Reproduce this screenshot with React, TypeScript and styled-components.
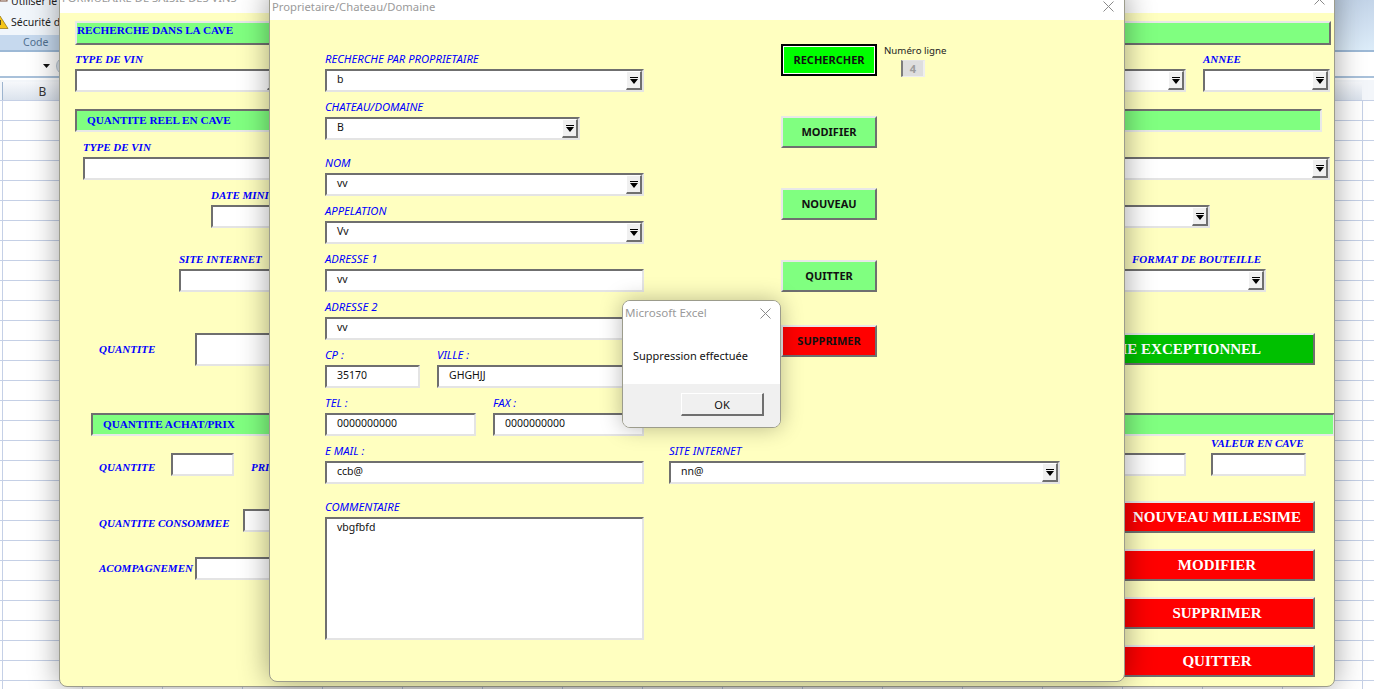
import React from 'react';

import styled, { createGlobalStyle } from 'styled-components';

const GlobalStyle = createGlobalStyle`
  html, body {
    margin: 0;
    height: 100%;
    overflow: hidden;
    background: #fff;
  }
`;

const COLUMNS = 'BCDEFGHIJKLMNOPQR'.split('');

const Desktop = styled.div`
  position: relative;
  width: 1374px;
  height: 689px;
  overflow: hidden;
  display: flex;
  flex-direction: column;
  font-family: 'Noto Sans', sans-serif;
`;

/* Excel behind the forms */

const Ribbon = styled.div`
  height: 52px;
  flex: none;
  overflow: hidden;
  box-sizing: border-box;
  border-bottom: 2px solid #9db9d6;
  background: linear-gradient(#c3d4e8, #dcecf9);
  position: relative;
`;

const RibbonPanel = styled.div`
  width: 59px;
  height: 35px;
  background: #f1f6fb;
  font-size: 10.5px;
  color: #222;
  white-space: nowrap;
  overflow: hidden;
`;

const RibbonLine = styled.div<{ $top: number }>`
  display: flex;
  align-items: center;
  gap: 2px;
  height: 16px;
  margin-top: ${({ $top }) => $top}px;
`;

const GroupName = styled.div`
  width: 59px;
  height: 15px;
  line-height: 15px;
  padding-left: 23px;
  box-sizing: border-box;
  font-size: 10.5px;
  color: #4f6f8f;
  background: #c6d9ee;
`;

const FormulaBar = styled.div`
  height: 24px;
  flex: none;
  box-sizing: content-box;
  background: #fff;
  border-bottom: 2px solid #a9c1da;
  display: flex;
  align-items: center;
  padding-left: 43px;
  gap: 6px;
`;

const FormulaRound = styled.div`
  width: 16px;
  height: 16px;
  flex: none;
  margin-top: 4px;
  border-radius: 50%;
  background: #dfe6ee;
  border: 1px solid #b9c6d4;
`;

const FormulaArrow = styled.svg`
  flex: none;
  margin-top: 4px;
`;

const HeaderRow = styled.div`
  height: 22px;
  flex: none;
  display: flex;
  padding: 2px 0 0 2px;
  box-sizing: border-box;
  background: #f3f6fa;
  border-top: 2px solid #fff;
`;

const ColumnHead = styled.div`
  width: 80px;
  flex: none;
  box-sizing: border-box;
  border-left: 1px solid #9db4cf;
  text-align: center;
  font-size: 12px;
  line-height: 20px;
  color: #333;
  background: linear-gradient(#f6f8fb, #dbe3ed);
`;

const Sheet = styled.div`
  flex: 1;
  background-color: #fff;
  background-image:
    linear-gradient(#c5d0e6 1px, transparent 1px),
    linear-gradient(90deg, #c5d0e6 1px, transparent 1px);
  background-size: 80px 20px;
  background-position: 2px 0;
`;

/* Windows */

const Window = styled.div`
  position: absolute;
  box-sizing: border-box;
  display: flex;
  flex-direction: column;
  background: #ffffc0;
  border: 1px solid #9c9c8c;
  border-radius: 8px;
  overflow: hidden;
`;

const MainWindow = styled(Window)`
  left: 59px;
  top: -20px;
  width: 1276px;
  height: 707px;
  box-shadow: 0 0 30px rgba(0, 0, 0, 0.38);
`;

const OwnerWindow = styled(Window)`
  left: 269px;
  top: -10px;
  width: 856px;
  height: 692px;
  box-shadow: 0 0 30px rgba(0, 0, 0, 0.38);
`;

const MessageWindow = styled(Window)`
  left: 622px;
  top: 300px;
  width: 159px;
  height: 128px;
  background: #fff;
  box-shadow: 0 0 22px rgba(0, 0, 0, 0.28);
`;

const TitleBar = styled.div<{ $height: number; $size: number }>`
  flex: none;
  height: ${({ $height }) => $height}px;
  display: flex;
  align-items: flex-end;
  justify-content: space-between;
  background: #fff;
  color: #9a9a9a;
  font-size: ${({ $size }) => $size}px;
`;

const TitleText = styled.span<{ $left: number; $bottom: number }>`
  margin-left: ${({ $left }) => $left}px;
  margin-bottom: ${({ $bottom }) => $bottom}px;
  line-height: 16px;
  white-space: nowrap;
`;

const CloseMark = styled.svg<{ $right: number; $bottom: number }>`
  width: 11px;
  height: 11px;
  flex: none;
  margin-right: ${({ $right }) => $right}px;
  margin-bottom: ${({ $bottom }) => $bottom}px;
`;

const Close = ({ right, bottom }: { right: number; bottom: number }) => (
  <CloseMark viewBox="0 0 11 11" $right={right} $bottom={bottom}>
    <path d="M0.5 0.5 10.5 10.5M10.5 0.5 0.5 10.5" stroke="#8a8a8a" strokeWidth="1" fill="none" />
  </CloseMark>
);

/* Controls */

const Sunken = styled.div<{ $width?: number; $height?: number }>`
  box-sizing: border-box;
  flex: none;
  position: relative;
  width: ${({ $width }) => ($width ? `${$width}px` : '100%')};
  height: ${({ $height }) => $height ?? 23}px;
  padding: 1px 0 0 10px;
  border-style: solid;
  border-width: 2px;
  border-color: #6f6f6f #e4e4e4 #e4e4e4 #6f6f6f;
  background: #fff;
  font-size: 10.5px;
  line-height: 15px;
  color: #111;
  white-space: nowrap;
  overflow: hidden;
`;

const DropButton = styled.div`
  position: absolute;
  top: 0;
  right: 0;
  bottom: 0;
  width: 16px;
  box-sizing: border-box;
  display: flex;
  align-items: center;
  justify-content: center;
  background: #f0f0f0;
  border-style: solid;
  border-width: 1px 2px 2px 1px;
  border-color: #fff #6f6f6f #6f6f6f #fff;
`;

const Combo = ({ width, value }: { width?: number; value?: string }) => (
  <Sunken $width={width}>
    {value}
    <DropButton>
      <svg width="8" height="7" viewBox="0 0 8 7">
        <path d="M0 0H8V1H0ZM0 2H8L4 7Z" fill="#000" />
      </svg>
    </DropButton>
  </Sunken>
);

const Field = styled.div<{ $width?: number; $end?: boolean; $top?: number }>`
  display: flex;
  flex-direction: column;
  flex: none;
  gap: 3px;
  width: ${({ $width }) => ($width ? `${$width}px` : 'auto')};
  align-items: ${({ $end }) => ($end ? 'flex-end' : 'flex-start')};
  margin-top: ${({ $top }) => $top ?? 0}px;
`;

const SerifLabel = styled.div<{ $end?: number }>`
  height: 13px;
  line-height: 13px;
  font-family: 'Liberation Serif', serif;
  font-weight: bold;
  font-style: italic;
  font-size: 11px;
  color: #00f;
  white-space: nowrap;
  margin-right: ${({ $end }) => $end ?? 0}px;
`;

const SansLabel = styled.div`
  height: 14px;
  line-height: 14px;
  font-style: italic;
  font-size: 11.25px;
  color: #00f;
  white-space: nowrap;
`;

/* Main form, behind */

const MainBody = styled.div`
  flex: 1;
  display: flex;
  flex-direction: column;
`;

const SectionBar = styled.div<{ $left: number; $right: number; $top: number; $raised?: boolean; $indent: number }>`
  box-sizing: border-box;
  flex: none;
  height: ${({ $raised }) => ($raised ? 24 : 23)}px;
  margin: ${({ $top }) => $top}px ${({ $right }) => $right}px 0 ${({ $left }) => $left}px;
  padding: ${({ $raised }) => ($raised ? 0 : 2)}px 0 0 ${({ $indent }) => $indent}px;
  background: #80ff80;
  border-style: solid;
  border-width: 2px;
  border-color: ${({ $raised }) =>
    $raised ? '#e8e8e8 #6f6f6f #6f6f6f #e8e8e8' : '#6f6f6f #e8e8e8 #e8e8e8 #6f6f6f'};
  font-family: 'Liberation Serif', serif;
  font-weight: bold;
  font-size: 11.2px;
  line-height: 14px;
  color: #00f;
  white-space: nowrap;
`;

const SpreadRow = styled.div<{ $left: number; $right: number; $top: number; $end?: boolean }>`
  display: flex;
  flex: none;
  justify-content: space-between;
  align-items: ${({ $end }) => ($end ? 'flex-end' : 'flex-start')};
  margin: ${({ $top }) => $top}px ${({ $right }) => $right}px 0 ${({ $left }) => $left}px;
`;

const Group = styled.div<{ $gap: number; $center?: boolean }>`
  display: flex;
  align-items: ${({ $center }) => ($center ? 'center' : 'flex-end')};
  gap: ${({ $gap }) => $gap}px;
`;

const InlineLabel = styled(SerifLabel)<{ $width?: number; $drop?: number }>`
  width: ${({ $width }) => ($width ? `${$width}px` : 'auto')};
  flex: none;
  margin-top: ${({ $drop }) => $drop ?? 0}px;
`;

const BigButton = styled.div<{ $width: number; $tone: string }>`
  box-sizing: border-box;
  flex: none;
  width: ${({ $width }) => $width}px;
  height: 32px;
  display: flex;
  align-items: center;
  justify-content: center;
  background: ${({ $tone }) => $tone};
  border-style: solid;
  border-width: 2px;
  border-color: #e8e8e8 #6f6f6f #6f6f6f #e8e8e8;
  font-family: 'Liberation Serif', serif;
  font-weight: bold;
  font-size: 15px;
  color: #fff;
  white-space: nowrap;
`;

const ButtonStack = styled.div`
  display: flex;
  flex-direction: column;
  gap: 16px;
`;

const LeftStack = styled.div`
  display: flex;
  flex-direction: column;
  gap: 25px;
  padding-top: 8px;
`;

/* Owner form, in front */

const OwnerBody = styled.div`
  flex: 1;
  padding: 24px 0 0 55px;
  display: flex;
  flex-direction: column;
`;

const OwnerTop = styled.div`
  display: flex;
  align-items: flex-start;
`;

const FieldStack = styled.div`
  width: 319px;
  flex: none;
  display: flex;
  flex-direction: column;
  gap: 8px;
  padding-top: 8px;
`;

const FieldPair = styled.div`
  display: flex;
  gap: 17px;
`;

const ActionColumn = styled.div`
  margin-left: 137px;
  display: flex;
  flex-direction: column;
`;

const ActionButton = styled.div<{ $tone: string; $top?: number; $focused?: boolean }>`
  box-sizing: border-box;
  width: 96px;
  height: 32px;
  margin-top: ${({ $top }) => $top ?? 0}px;
  padding-bottom: 2px;
  display: flex;
  align-items: center;
  justify-content: center;
  background: ${({ $tone }) => $tone};
  border-style: solid;
  border-width: 2px;
  border-color: ${({ $focused }) =>
    $focused ? '#000' : '#e8e8e8 #6f6f6f #6f6f6f #e8e8e8'};
  outline: ${({ $focused }) => ($focused ? '1px solid #fff' : 'none')};
  outline-offset: -3px;
  font-size: 11px;
  font-weight: bold;
  color: #111;
`;

const LineInfo = styled.div`
  display: flex;
  gap: 7px;
  height: 32px;
`;

const LineNumber = styled.div`
  display: flex;
  flex-direction: column;
  font-size: 9.7px;
  line-height: 14px;
  color: #222;
  gap: 2px;
  white-space: nowrap;
`;

const LineValue = styled.div`
  box-sizing: border-box;
  width: 24px;
  height: 17px;
  flex: none;
  margin-left: 17px;
  text-align: center;
  background: #dedede;
  border-style: solid;
  border-width: 1px 2px 1px 2px;
  border-color: #e4e4e4 #eee #eee #7d7d7d;
  color: #9c9c9c;
  font-weight: bold;
  font-size: 11px;
  line-height: 15px;
`;

const ContactRow = styled.div`
  display: flex;
  gap: 25px;
  margin-top: 8px;
`;

/* Message box */

const MessageText = styled.div`
  flex: 1;
  padding: 23px 0 0 10px;
  font-size: 11px;
  line-height: 16px;
  color: #111;
`;

const MessageFooter = styled.div`
  flex: none;
  height: 43px;
  box-sizing: border-box;
  padding: 9px 16px 0 0;
  display: flex;
  justify-content: flex-end;
  background: #f0f0f0;
`;

const OkButton = styled.div`
  box-sizing: border-box;
  width: 83px;
  height: 23px;
  display: flex;
  align-items: center;
  justify-content: center;
  background: #f0f0f0;
  border-style: solid;
  border-width: 1px 2px 2px 1px;
  border-color: #fff #6f6f6f #6f6f6f #fff;
  font-size: 11px;
  color: #111;
`;

const WarningIcon = () => (
  <svg width="9" height="15" viewBox="0 0 9 15" style={{ flex: 'none' }}>
    <path d="M0 1 8 13.5H-6Z" fill="#f5c518" stroke="#8a6d10" strokeWidth="0.7" />
    <path d="M0 5V10" stroke="#222" strokeWidth="1.5" />
  </svg>
);

const FormIcon = () => (
  <svg width="9" height="12" viewBox="0 0 9 12" style={{ flex: 'none' }}>
    <rect x="0" y="0" width="7" height="6" fill="#fff" stroke="#7a4f3a" />
    <rect x="2" y="2" width="4" height="2" fill="#c0504d" />
  </svg>
);

const App: React.FC = () => {
  return (
    <Desktop>
      <GlobalStyle />

      <Ribbon>
        <RibbonPanel>
          <RibbonLine $top={-7}>
            <FormIcon />
            Utiliser le formulaire
          </RibbonLine>
          <RibbonLine $top={5}>
            <WarningIcon />
            Sécurité des macros
          </RibbonLine>
        </RibbonPanel>
        <GroupName>Code</GroupName>
      </Ribbon>
      <FormulaBar>
        <FormulaArrow width="7" height="4" viewBox="0 0 7 4">
          <path d="M0 0H7L3.5 4Z" fill="#111" />
        </FormulaArrow>
        <FormulaRound />
      </FormulaBar>
      <HeaderRow>
        {COLUMNS.map((name) => (
          <ColumnHead key={name}>{name}</ColumnHead>
        ))}
      </HeaderRow>
      <Sheet />

      <MainWindow>
        <TitleBar $height={32} $size={11.2}>
          <TitleText $left={2} $bottom={7}>FORMULAIRE DE SAISIE DES VINS</TitleText>
          <Close right={9} bottom={8} />
        </TitleBar>
        <MainBody>
          <SectionBar $left={15} $right={3} $top={8} $raised $indent={0}>RECHERCHE DANS LA CAVE</SectionBar>

          <SpreadRow $left={15} $right={4} $top={8} $end>
            <Field>
              <SerifLabel>TYPE DE VIN</SerifLabel>
              <Combo width={210} />
            </Field>
            <Group $gap={17}>
              <Combo width={200} />
              <Field>
                <SerifLabel>ANNEE</SerifLabel>
                <Combo width={127} />
              </Field>
            </Group>
          </SpreadRow>

          <SectionBar $left={15} $right={12} $top={17} $indent={10}>QUANTITE REEL EN CAVE</SectionBar>

          <SpreadRow $left={23} $right={4} $top={9}>
            <Field $width={1247}>
              <SerifLabel>TYPE DE VIN</SerifLabel>
              <Combo />
            </Field>
          </SpreadRow>

          <SpreadRow $left={151} $right={124} $top={9} $end>
            <Field>
              <SerifLabel>DATE MINI</SerifLabel>
              <Sunken $width={200} />
            </Field>
            <Combo width={200} />
          </SpreadRow>

          <SpreadRow $left={119} $right={68} $top={25} $end>
            <Field>
              <SerifLabel>SITE INTERNET</SerifLabel>
              <Sunken $width={200} />
            </Field>
            <Field $end>
              <SerifLabel $end={5}>FORMAT DE BOUTEILLE</SerifLabel>
              <Combo width={300} />
            </Field>
          </SpreadRow>

          <SpreadRow $left={39} $right={19} $top={41}>
            <Group $gap={40} $center>
              <InlineLabel $width={56}>QUANTITE</InlineLabel>
              <Sunken $width={120} $height={33} />
            </Group>
            <BigButton $width={320} $tone="#00c000">MILLESIME EXCEPTIONNEL</BigButton>
          </SpreadRow>

          <SectionBar $left={31} $right={-1} $top={47} $indent={10}>QUANTITE ACHAT/PRIX</SectionBar>

          <SpreadRow $left={39} $right={28} $top={1} $end>
            <Group $gap={17} $center>
              <InlineLabel $width={55} $drop={6}>QUANTITE</InlineLabel>
              <Sunken $width={63} />
              <InlineLabel $drop={6}>PRIX</InlineLabel>
            </Group>
            <Group $gap={25}>
              <Sunken $width={150} />
              <Field $width={95}>
                <SerifLabel>VALEUR EN CAVE</SerifLabel>
                <Sunken $width={95} />
              </Field>
            </Group>
          </SpreadRow>

          <SpreadRow $left={39} $right={19} $top={25}>
            <LeftStack>
              <Group $gap={14} $center>
                <InlineLabel $width={130} $drop={6}>QUANTITE CONSOMMEE</InlineLabel>
                <Sunken $width={60} />
              </Group>
              <Group $gap={2} $center>
                <InlineLabel $width={94}>ACOMPAGNEMEN</InlineLabel>
                <Sunken $width={120} />
              </Group>
            </LeftStack>
            <ButtonStack>
              <BigButton $width={196} $tone="#ff0000">NOUVEAU MILLESIME</BigButton>
              <BigButton $width={196} $tone="#ff0000">MODIFIER</BigButton>
              <BigButton $width={196} $tone="#ff0000">SUPPRIMER</BigButton>
              <BigButton $width={196} $tone="#ff0000">QUITTER</BigButton>
            </ButtonStack>
          </SpreadRow>
        </MainBody>
      </MainWindow>

      <OwnerWindow>
        <TitleBar $height={29} $size={11.25}>
          <TitleText $left={2} $bottom={5}>Proprietaire/Chateau/Domaine</TitleText>
          <Close right={10} bottom={8} />
        </TitleBar>
        <OwnerBody>
          <OwnerTop>
            <FieldStack>
              <Field $width={319}>
                <SansLabel>RECHERCHE PAR PROPRIETAIRE</SansLabel>
                <Combo value="b" />
              </Field>
              <Field $width={255}>
                <SansLabel>CHATEAU/DOMAINE</SansLabel>
                <Combo value="B" />
              </Field>
              <Field $width={319} $top={8}>
                <SansLabel>NOM</SansLabel>
                <Combo value="vv" />
              </Field>
              <Field $width={319}>
                <SansLabel>APPELATION</SansLabel>
                <Combo value="Vv" />
              </Field>
              <Field $width={319}>
                <SansLabel>ADRESSE 1</SansLabel>
                <Sunken>vv</Sunken>
              </Field>
              <Field $width={319}>
                <SansLabel>ADRESSE 2</SansLabel>
                <Sunken>vv</Sunken>
              </Field>
              <FieldPair>
                <Field $width={95}>
                  <SansLabel>CP :</SansLabel>
                  <Sunken>35170</Sunken>
                </Field>
                <Field $width={207}>
                  <SansLabel>VILLE :</SansLabel>
                  <Sunken>GHGHJJ</Sunken>
                </Field>
              </FieldPair>
              <FieldPair>
                <Field $width={151}>
                  <SansLabel>TEL :</SansLabel>
                  <Sunken>0000000000</Sunken>
                </Field>
                <Field $width={151}>
                  <SansLabel>FAX :</SansLabel>
                  <Sunken>0000000000</Sunken>
                </Field>
              </FieldPair>
            </FieldStack>
            <ActionColumn>
              <LineInfo>
                <ActionButton $tone="#00ff00" $focused>RECHERCHER</ActionButton>
                <LineNumber>
                  Numéro ligne
                  <LineValue>4</LineValue>
                </LineNumber>
              </LineInfo>
              <ActionButton $tone="#80ff80" $top={40}>MODIFIER</ActionButton>
              <ActionButton $tone="#80ff80" $top={40}>NOUVEAU</ActionButton>
              <ActionButton $tone="#80ff80" $top={40}>QUITTER</ActionButton>
              <ActionButton $tone="#ff0000" $top={33}>SUPPRIMER</ActionButton>
            </ActionColumn>
          </OwnerTop>
          <ContactRow>
            <Field $width={319}>
              <SansLabel>E MAIL :</SansLabel>
              <Sunken>ccb@</Sunken>
            </Field>
            <Field $width={391}>
              <SansLabel>SITE INTERNET</SansLabel>
              <Combo value="nn@" />
            </Field>
          </ContactRow>
          <Field $width={319} $top={16}>
            <SansLabel>COMMENTAIRE</SansLabel>
            <Sunken $height={123}>vbgfbfd</Sunken>
          </Field>
        </OwnerBody>
      </OwnerWindow>

      <MessageWindow>
        <TitleBar $height={24} $size={11.6}>
          <TitleText $left={2} $bottom={4}>Microsoft Excel</TitleText>
          <Close right={9} bottom={6} />
        </TitleBar>
        <MessageText>Suppression effectuée</MessageText>
        <MessageFooter>
          <OkButton>OK</OkButton>
        </MessageFooter>
      </MessageWindow>
    </Desktop>
  );
};

export default App;
